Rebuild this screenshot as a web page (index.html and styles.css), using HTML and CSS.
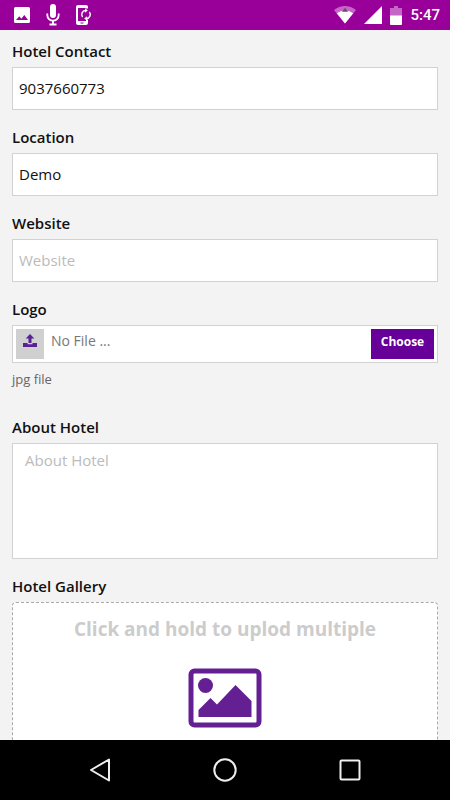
FILE: index.html
```html
<!DOCTYPE html>
<html lang="en">
<head>
<meta charset="utf-8">
<meta name="viewport" content="width=device-width, initial-scale=1">
<title>Hotel details</title>
<link rel="stylesheet" href="styles.css">
</head>
<body>
<header class="status">
  <div class="status-left">
    <svg width="18" height="18" viewBox="0 0 18 18" aria-hidden="true"><path fill="#fff" fill-rule="evenodd" d="M2.500 1h13A1.500 1.500 0 0 1 17 2.500v13a1.500 1.500 0 0 1-1.500 1.500h-13A1.500 1.500 0 0 1 1 15.500v-13A1.500 1.500 0 0 1 2.500 1zM3 14h12l-3.700-5-3 3.800-2-2.500z"/></svg>
    <svg width="14" height="22" viewBox="0 0 14 22" aria-hidden="true"><rect x="4" y="0" width="6" height="14" rx="3" fill="#fff"/><path fill="none" stroke="#fff" stroke-width="1.800" d="M1.300 9.500v1.500a5.700 5.700 0 0 0 11.400 0V9.500M7 16.500V20M3.500 20.500h7"/></svg>
    <svg width="17" height="22" viewBox="0 0 17 22" aria-hidden="true"><path fill="#fff" fill-rule="evenodd" d="M3 1h8a2 2 0 0 1 2 2v1.500h-2V4H3v13h8v-1.500h2V19a2 2 0 0 1-2 2H3a2 2 0 0 1-2-2V3a2 2 0 0 1 2-2zM5.500 18.400v1h3v-1z"/><path fill="none" stroke="#fff" stroke-width="1.400" d="M7.600 13a4 4 0 0 1 2.900-6.500M14.400 8a4 4 0 0 1-2.900 6.500"/><path fill="#fff" d="M10 4.200l2.800 2.300L10 8.800zM12 12.200v4.600l-2.800-2.300z"/></svg>
  </div>
  <div class="status-right">
    <svg width="22" height="18" viewBox="0 0 22 18" aria-hidden="true"><path fill="#c565c5" d="M0 4a17 17 0 0 1 22 0L11 17.500z"/><path fill="#fff" d="M2.800 7.300a13 13 0 0 1 16.400 0L11 17.500z"/><path fill="#6b4a6b" d="M8 5.800l3-4 3 4z"/></svg>
    <svg width="18" height="18" viewBox="0 0 18 18" aria-hidden="true"><path fill="#fff" d="M18 0v18H0z"/></svg>
    <svg width="12" height="19" viewBox="0 0 12 19" aria-hidden="true"><path fill="#c565c5" d="M4 0h4v2h4v8H0V2h4z"/><path fill="#fff" d="M0 9.500h12V18a1 1 0 0 1-1 1H1a1 1 0 0 1-1-1z"/></svg>
    <time class="clock">5:47</time>
  </div>
</header>
<main class="page">
  <form class="form">
    <div class="field">
      <label class="label" for="contact">Hotel Contact</label>
      <input class="input" id="contact" type="text" value="9037660773">
    </div>
    <div class="field">
      <label class="label" for="location">Location</label>
      <input class="input" id="location" type="text" value="Demo">
    </div>
    <div class="field">
      <label class="label" for="website">Website</label>
      <input class="input" id="website" type="text" placeholder="Website">
    </div>
    <div class="field field-file">
      <label class="label" for="logo">Logo</label>
      <div class="file">
        <span class="file-icon"><svg width="14" height="14" viewBox="0 0 14 14" aria-hidden="true"><path fill="#5b1f96" d="M7 0l4.300 4.500H8.500V9h-3V4.500H2.700zM0 9h4.500v1.200h5V9H14v4H0z"/></svg></span>
        <span class="file-name">No File ...</span>
        <input class="hidden-input" id="logo" type="file" accept="image/jpeg">
        <button class="choose" type="button">Choose</button>
      </div>
      <p class="hint">jpg file</p>
    </div>
    <div class="field">
      <label class="label" for="about">About Hotel</label>
      <textarea class="input textarea" id="about" placeholder="About Hotel"></textarea>
    </div>
    <div class="field">
      <label class="label" for="gallery">Hotel Gallery</label>
      <label class="drop" for="gallery">
        <span class="drop-text">Click and hold to uplod multiple</span>
        <svg width="74" height="60" viewBox="0 0 74 60" aria-hidden="true"><rect x="3" y="3" width="68" height="54" rx="3.500" fill="none" stroke="#642093" stroke-width="5"/><circle cx="17.500" cy="17.500" r="7.500" fill="#642093"/><path fill="#642093" d="M10.500 49V42L22.500 30l6.500 6.500L47.500 17 63.500 33v16z"/></svg>
      </label>
      <input class="hidden-input" id="gallery" type="file" multiple>
    </div>
  </form>
</main>
<nav class="nav">
  <button class="nav-button" type="button" aria-label="Back"><svg width="24" height="24" viewBox="0 0 24 24"><path fill="none" stroke="#eee" stroke-width="2" stroke-linejoin="round" d="M21 1.500v21L3 12z"/></svg></button>
  <button class="nav-button" type="button" aria-label="Home"><svg width="24" height="24" viewBox="0 0 24 24"><circle cx="12" cy="12" r="10.700" fill="none" stroke="#eee" stroke-width="2"/></svg></button>
  <button class="nav-button" type="button" aria-label="Recent apps"><svg width="24" height="24" viewBox="0 0 24 24"><rect x="2.500" y="2.500" width="19" height="19" rx="1" fill="none" stroke="#eee" stroke-width="2"/></svg></button>
</nav>
</body>
</html>
```
FILE: styles.css
```css
* {
  box-sizing: border-box;
}

body {
  display: flex;
  flex-direction: column;
  height: 100vh;
  margin: 0;
  background: #f3f3f3;
  color: #111;
  font-family: "Open Sans", "Noto Sans", sans-serif;
  font-size: 15px;
}

.status {
  display: flex;
  flex: none;
  align-items: center;
  justify-content: space-between;
  height: 30px;
  padding: 0 10px 0 13px;
  background: #990099;
}

.status-left {
  display: flex;
  align-items: center;
  gap: 15px;
}

.status-right {
  display: flex;
  align-items: center;
  gap: 8px;
}

.clock {
  color: #fff;
  font: 500 15px/20px Roboto, sans-serif;
}

.page {
  flex: 1;
  min-height: 0;
  overflow: hidden;
}

.form {
  display: flex;
  flex-direction: column;
  gap: 17px;
  padding: 11px 12px 0;
}

.field {
  display: flex;
  flex-direction: column;
  gap: 6px;
}

.field-file {
  margin-bottom: 10px;
}

.label {
  align-self: flex-start;
  font-weight: 600;
  line-height: 20px;
}

.input {
  width: 100%;
  height: 43px;
  margin: 0;
  padding: 0 6px 2px;
  border: 1px solid #d2d2d2;
  border-radius: 0;
  outline: 0;
  background: #fff;
  color: #111;
  font: 15px/20px "Open Sans", "Noto Sans", sans-serif;
}

.input::placeholder {
  color: #bbb;
  opacity: 1;
}

.textarea {
  display: block;
  height: 116px;
  padding: 6px 12px;
  resize: none;
}

.file {
  display: flex;
  position: relative;
  height: 38px;
  padding: 3px;
  border: 1px solid #d2d2d2;
  background: #fff;
}

.file-icon {
  display: flex;
  justify-content: center;
  width: 28px;
  padding-top: 5px;
  background: #d0d0d0;
}

.file-name {
  flex: 1;
  padding-left: 7px;
  color: #777;
  font-size: 14px;
  line-height: 24px;
}

.hidden-input {
  position: absolute;
  width: 1px;
  height: 1px;
  opacity: 0;
}

.choose {
  width: 63px;
  padding: 0 0 5px;
  border: 0;
  background: #660099;
  color: #fff;
  font: 700 12px/16px "Open Sans", "Noto Sans", sans-serif;
}

.hint {
  margin: 0;
  color: #666;
  font-size: 13px;
  line-height: 21px;
}

.drop {
  display: flex;
  flex-direction: column;
  align-items: center;
  gap: 25px;
  height: 200px;
  padding-top: 12px;
  border: 1px dashed #aaa;
  border-radius: 4px;
  background: #fff;
}

.drop-text {
  color: #ccc;
  font-size: 19px;
  font-weight: 700;
  line-height: 28px;
}

.nav {
  display: flex;
  flex: none;
  align-items: center;
  justify-content: center;
  gap: 101px;
  height: 60px;
  background: #000;
}

.nav-button {
  display: flex;
  padding: 0;
  border: 0;
  background: none;
}
```
